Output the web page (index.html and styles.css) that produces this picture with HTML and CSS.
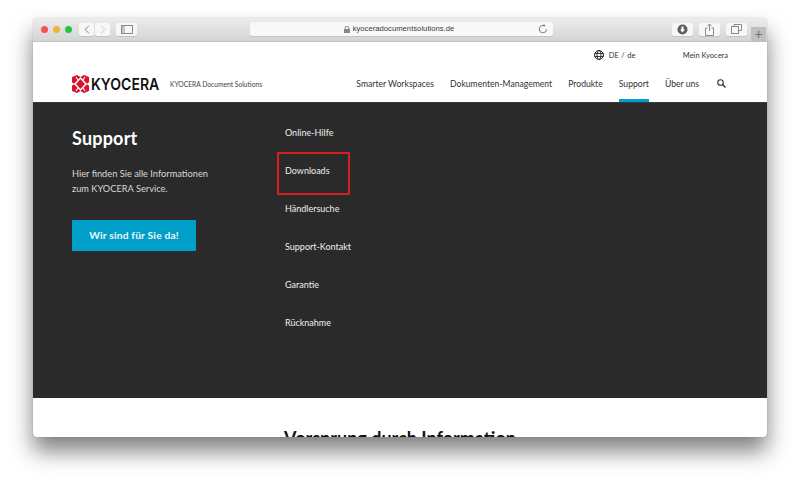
FILE: index.html
```html
<!DOCTYPE html>
<html lang="de">
<head>
<meta charset="utf-8">
<title>KYOCERA Support</title>
<link rel="stylesheet" href="styles.css">
</head>
<body>
<div class="window">
  <div class="toolbar">
    <div class="lights"><i class="light red"></i><i class="light yellow"></i><i class="light green"></i></div>
    <div class="btn-group">
      <div class="tbtn nav"><svg width="8" height="12" viewBox="0 0 8 12"><path d="M6.5 1 1.5 6l5 5" fill="none" stroke="#77777a" stroke-width="1.2"/></svg></div>
      <div class="tbtn nav"><svg width="8" height="12" viewBox="0 0 8 12"><path d="M1.5 1l5 5-5 5" fill="none" stroke="#c0c0c2" stroke-width="1.2"/></svg></div>
    </div>
    <div class="tbtn side"><svg width="12" height="9" viewBox="0 0 12 9"><rect x=".5" y=".5" width="11" height="8" fill="none" stroke="#8a8a8c"/><rect x="1" y="1" width="3" height="7" fill="#c5c5c7"/></svg></div>
    <div class="address">
      <svg class="lock" width="6" height="7" viewBox="0 0 6 7"><path d="M1.2 3V2a1.8 1.8 0 0 1 3.6 0v1" fill="none" stroke="#88888a"/><rect y="3" width="6" height="4" fill="#88888a"/></svg>
      <span class="url">kyoceradocumentsolutions.de</span>
      <svg class="reload" width="10" height="10" viewBox="0 0 10 10"><path d="M8.6 5.2A3.7 3.7 0 1 1 5 1.4h1.4" fill="none" stroke="#808082" stroke-width="1"/><path d="M5.6 0 7.6 1.4 5.6 2.9z" fill="#808082"/></svg>
    </div>
    <div class="tools">
      <div class="tbtn tool"><svg width="11" height="11" viewBox="0 0 11 11"><circle cx="5.5" cy="5.5" r="5" fill="#5d5d60"/><path d="M4.5 2.5h2v3h1.5L5.5 8.5 3 5.500h1.500z" fill="#fff"/></svg></div>
      <div class="tbtn tool"><svg width="9" height="13" viewBox="0 0 9 13"><path d="M2.500 5H.5v7.500h8V5h-2M4.500 8V1M2.500 3l2-2 2 2" fill="none" stroke="#8a8a8c"/></svg></div>
      <div class="tbtn tool"><svg width="11" height="10" viewBox="0 0 11 10"><path d="M3 2.500V.5h7.500v6H8" fill="none" stroke="#8a8a8c"/><rect x=".5" y="2.500" width="7" height="7" fill="none" stroke="#8a8a8c"/></svg></div>
    </div>
    <div class="newtab">+</div>
  </div>

  <header class="site-header">
    <div class="meta">
      <svg class="globe" width="10" height="10" viewBox="0 0 11 11"><circle cx="5.5" cy="5.500" r="4.900" fill="none" stroke="#222" stroke-width="1.100"/><ellipse cx="5.500" cy="5.500" rx="2.200" ry="4.900" fill="none" stroke="#222"/><path d="M.6 3.800h9.800M.6 7.200h9.800" stroke="#222"/></svg>
      <span class="lang">DE / de</span>
      <span class="mein">Mein Kyocera</span>
    </div>
    <div class="mainrow">
      <div class="brand">
        <svg class="mark" width="17" height="18" viewBox="0 0 17 18"><path d="M0 2 5 0l3.500 2L12 0l5 2v5l-1.500 2L17 11v5l-5 2-3.500-2L5 18l-5-2v-5l1.500-2L0 7z" fill="#d8122f"/><path d="M8.500 3 14 9l-5.500 6L3 9z" fill="none" stroke="#fff" stroke-width="1.500"/><path d="M0 9h3.500M13.500 9H17M4 2l2 3M13 2l-2 3M4 16l2-3M13 16l-2-3" stroke="#fff" stroke-width="1.100"/></svg>
        <span class="wordmark">KYOCERA</span>
        <span class="tagline">KYOCERA Document Solutions</span>
      </div>
      <nav class="nav-main">
        <a class="nav-item">Smarter Workspaces</a>
        <a class="nav-item">Dokumenten-Management</a>
        <a class="nav-item">Produkte</a>
        <a class="nav-item active">Support</a>
        <a class="nav-item">Über uns</a>
        <svg class="search" width="9" height="9" viewBox="0 0 9 9"><circle cx="3.500" cy="3.500" r="2.800" fill="none" stroke="#333" stroke-width="1.100"/><path d="M5.500 5.500 8.500 8.500" stroke="#333" stroke-width="1.400"/></svg>
      </nav>
    </div>
  </header>

  <section class="panel">
    <div class="intro">
      <h2>Support</h2>
      <p>Hier finden Sie alle Informationen<br>zum KYOCERA Service.</p>
      <a class="cta">Wir sind für Sie da!</a>
    </div>
    <ul class="links">
      <li>Online-Hilfe</li>
      <li class="marked">Downloads</li>
      <li>Händlersuche</li>
      <li>Support-Kontakt</li>
      <li>Garantie</li>
      <li>Rücknahme</li>
    </ul>
  </section>

  <section class="below">
    <h3>Vorsprung durch Information</h3>
  </section>
</div>
</body>
</html>
```
FILE: styles.css
```css
* { box-sizing: border-box; }
html, body { margin: 0; height: 485px; overflow: hidden; background: #fff; }
body { padding: 18px 33px 0; font-family: "Lato", "Liberation Sans", sans-serif; }
a { display: block; }

.window {
  width: 734px; height: 419px; overflow: hidden; background: #fff;
  border-radius: 4px;
  box-shadow: 0 0 1px rgba(0,0,0,.4), 0 14px 22px rgba(0,0,0,.5);
}
.toolbar {
  height: 23.500px; display: flex; align-items: center; padding: 0 0 0 4px;
  background: linear-gradient(#ececec, #d5d4d5);
  border-bottom: 1px solid #c4c4c4;
}
.lights { display: flex; gap: 5px; margin-left: 4px; }
.light { width: 7px; height: 7px; border-radius: 50%; display: block; }
.red { background: #f2544e; }
.yellow { background: #f5b03a; }
.green { background: #25c63f; }
.btn-group { display: flex; gap: 1px; margin-left: 7px; }
.tbtn {
  height: 13px; background: #f7f7f7; border-radius: 2px;
  display: flex; align-items: center; justify-content: center;
  box-shadow: 0 1px 0 rgba(0,0,0,.1);
}
.nav { width: 15px; }
.nav svg { height: 9px; }
.side { width: 21px; margin-left: 6px; }
.address {
  position: relative; width: 303px; height: 14px; margin-left: 113px; background: #f8f8f8;
  border-radius: 2px; box-shadow: 0 1px 0 rgba(0,0,0,.1);
  display: flex; align-items: center; justify-content: center; gap: 3px; padding-right: 5px;
}
.url { font: 7.650px/14px "Liberation Sans", sans-serif; color: #3a3a3d; letter-spacing: .02px; }
.reload { position: absolute; right: 5px; top: 2px; }
.tools { display: flex; gap: 6px; margin-left: 119px; }
.tool { width: 21px; }
.newtab {
  width: 15px; height: 15px; margin: 6px 0 -1px 4px; background: #bfbfbf; color: #6f6f6f;
  font: 14px/14px "Liberation Sans", sans-serif; text-align: center; align-self: flex-end;
}

.site-header { height: 60.500px; padding: 0 39px; display: flex; flex-direction: column; }
.meta {
  height: 26px; display: flex; align-items: center; justify-content: flex-end;
  font-size: 7.500px; color: #333; padding-top: 1px;
}
.globe { margin-right: 5px; }
.lang { margin-right: 47px; letter-spacing: .25px; }
.mainrow { flex: 1; display: flex; justify-content: space-between; align-items: stretch; }
.brand { display: flex; align-items: center; padding-bottom: 1px; }
.mark { margin-right: 2px; flex: none; }
.wordmark {
  font: 600 16.500px/1 "Inter", "Liberation Sans", sans-serif; color: #111;
  width: 69px; transform: scaleX(.85); transform-origin: left; white-space: nowrap;
}
.tagline { margin-left: 10px; font-size: 6.700px; color: #444; white-space: nowrap; }
.nav-main { display: flex; align-items: stretch; font-size: 8.620px; color: #333; }
.nav-item { display: flex; align-items: center; padding: 0 0 3px; margin-right: 16px; white-space: nowrap; }
.active { box-shadow: inset 0 -3px 0 #009fc9; }
.search { align-self: center; margin: 0 2px 3px 2px; }

.panel {
  height: 296px; background: #2a2a2a; color: #fff; display: flex;
  padding: 25px 0 0 39px; border-top: 1px solid #3a3a3a;
}
.intro { width: 213px; }
.intro h2 { margin: 0; font-size: 18px; line-height: 20px; font-weight: 700; letter-spacing: .2px; }
.intro p { margin: 19px 0 0; font-size: 9.250px; line-height: 14.500px; color: #d8d8d8; }
.cta {
  width: 124px; height: 31px; margin-top: 24px; background: #009fc9; color: #f2f8fb;
  font-size: 10.200px; font-weight: 700; line-height: 30px; text-align: center; letter-spacing: .2px;
}
.links { list-style: none; margin: -2px 0 0; padding: 0; font-size: 9px; font-weight: 400; color: #eee; }
.links li { height: 38px; line-height: 14px; position: relative; white-space: nowrap; }
.marked::after {
  content: ""; position: absolute; left: -8px; top: -12px; width: 69px; height: 39px;
  border: 2px solid #d4201f;
}

.below { height: 39px; overflow: hidden; padding-top: 30px; text-align: center; }
.below h3 { margin: 0; font-size: 18px; line-height: 20px; font-weight: 700; color: #111; }
```
